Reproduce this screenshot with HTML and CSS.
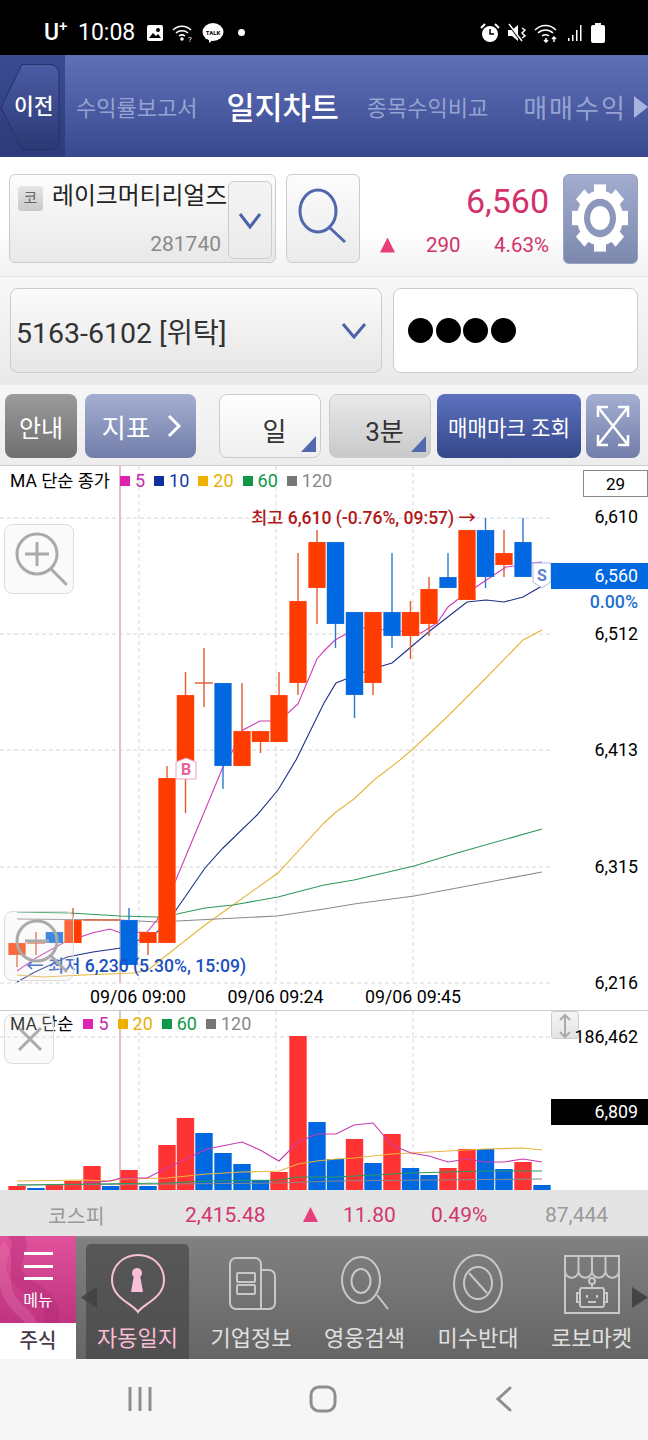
FILE: index.html
```html
<!DOCTYPE html>
<html lang="ko">

<head>
  <meta charset="UTF-8">
  <meta name="viewport" content="width=device-width, initial-scale=1.0">
  <title>일지차트</title>
  <link rel="stylesheet" href="styles.css">
</head>

<body>
  <!-- 상태바 -->
  <div class="status">
    <div class="status-left">
      <span class="carrier">U<sup>+</sup></span>
      <span class="clock">10:08</span>
      <svg class="ic" width="18" height="18" viewBox="0 0 18 18"><rect x="1" y="1" width="16" height="16" rx="2" fill="#fff"/><circle cx="12" cy="6" r="2" fill="#000"/><path d="M3 14l4-5 3 3 2-2 3 4z" fill="#000"/></svg>
      <svg class="ic" width="22" height="20" viewBox="0 0 22 20" fill="none" stroke="#fff" stroke-width="1.5"><path d="M1 7c5-5 13-5 18 0M4 10c3-3 9-3 12 0M7 13c2-1.500 4-1.500 6 0"/><circle cx="10" cy="16" r="1" fill="#fff"/><text x="16" y="19" class="ic-q">?</text></svg>
      <svg class="ic" width="22" height="22" viewBox="0 0 22 22"><ellipse cx="11" cy="10" rx="10.500" ry="9" fill="#fff"/><path d="M7 17l0 4 5-4z" fill="#fff"/><text x="11" y="12.500" class="ic-talk">TALK</text></svg>
      <span class="dot"></span>
    </div>
    <div class="status-right">
      <svg class="ic" width="20" height="20" viewBox="0 0 20 20"><circle cx="10" cy="11" r="8" fill="#fff"/><path d="M10 6v5h4" stroke="#000" stroke-width="1.500" fill="none"/><path d="M1 5l4-4M19 5l-4-4" stroke="#fff" stroke-width="2"/></svg>
      <svg class="ic" width="20" height="20" viewBox="0 0 20 20"><path d="M1 7h4l6-5v16l-6-5H1z" fill="#fff"/><path d="M2 2l12 16" stroke="#000" stroke-width="2"/><path d="M2 1l13 17" stroke="#fff" stroke-width="1.500"/><path d="M15 5l3 2-3 3 3 3-3 2" stroke="#fff" fill="none" stroke-width="1.500"/></svg>
      <svg class="ic" width="26" height="20" viewBox="0 0 26 20" fill="none" stroke="#fff" stroke-width="1.500"><path d="M1 7c6-6 15-6 21 0M4 10c4-4 11-4 15 0M8 13c2-1.500 5-1.500 7 0"/><path d="M12 15v4M10 17l2 2 2-2M20 19v-5M18 16l2-2 2 2"/></svg>
      <svg class="ic" width="17" height="20" viewBox="0 0 17 20" fill="#fff"><rect x="1" y="15" width="1.500" height="3"/><rect x="5" y="12" width="1.500" height="6"/><rect x="9" y="7" width="1.500" height="11"/><rect x="13" y="2" width="1.500" height="16"/></svg>
      <svg class="ic" width="14" height="20" viewBox="0 0 14 20" fill="#fff"><rect x="4" y="0" width="6" height="3"/><rect x="0" y="2" width="14" height="18" rx="2"/></svg>
    </div>
  </div>

  <!-- 상단 탭 -->
  <div class="nav">
    <div class="back-wrap">
      <svg class="back-shape" width="60" height="87" viewBox="0 0 60 87">
        <defs>
          <linearGradient id="backFill" x1="0" y1="0" x2="0" y2="1">
            <stop offset="0" stop-color="#4c5ca3"/>
            <stop offset="1" stop-color="#2a3874"/>
          </linearGradient>
        </defs>
        <path d="M22 .5H50a9 9 0 0 1 9 9V78a8 8 0 0 1-8 8H22L1 43.500z" fill="url(#backFill)" stroke="#25316a"/>
      </svg>
      <span class="back">이전</span>
    </div>
    <div class="tabs">
      <span class="tab">수익률보고서</span>
      <span class="tab active">일지차트</span>
      <span class="tab">종목수익비교</span>
      <span class="tab wide">매매수익</span>
    </div>
    <span class="tab-next"></span>
  </div>

  <!-- 종목 -->
  <div class="stock-row">
    <div class="stock-box">
      <div class="stock-info">
        <div class="stock-name"><span class="badge">코</span><span class="name">레이크머티리얼즈</span></div>
        <div class="stock-code">281740</div>
      </div>
      <div class="stock-drop">
        <svg width="24" height="17" viewBox="0 0 24 17" fill="none" stroke="#4d62a8" stroke-width="3"><path d="M2 2l10 13L22 2"/></svg>
      </div>
    </div>
    <div class="search-btn">
      <svg width="74" height="89" viewBox="0 0 74 89" fill="none" stroke="#5267ad" stroke-width="3"><ellipse cx="32" cy="37" rx="18" ry="21"/><path d="M44 54l15 14"/></svg>
    </div>
    <div class="price">
      <div class="price-now">6,560</div>
      <div class="price-diff">
        <span class="up"></span>
        <span class="diff">290</span>
        <span class="rate">4.63%</span>
      </div>
    </div>
    <div class="gear-btn">
      <svg width="74" height="89" viewBox="0 0 74 89">
        <g transform="translate(37 44) scale(1 1.200)" fill="#fff">
          <rect x="-6" y="-28" width="12" height="56"/>
          <rect x="-6" y="-28" width="12" height="56" transform="rotate(45)"/>
          <rect x="-6" y="-28" width="12" height="56" transform="rotate(90)"/>
          <rect x="-6" y="-28" width="12" height="56" transform="rotate(135)"/>
          <circle r="23"/>
          <circle r="16" fill="#8c97bc"/>
          <circle r="10"/>
        </g>
      </svg>
    </div>
  </div>

  <!-- 계좌 -->
  <div class="account-row">
    <div class="account">
      <span>5163-6102 [위탁]</span>
      <svg width="26" height="17" viewBox="0 0 26 17" fill="none" stroke="#4d62a8" stroke-width="3"><path d="M2 2l11 13L24 2"/></svg>
    </div>
    <div class="password">
      <i></i><i></i><i></i><i></i>
    </div>
  </div>

  <!-- 버튼 -->
  <div class="tools">
    <div class="tbtn guide">안내</div>
    <div class="tbtn index-btn">지표
      <svg width="14" height="24" viewBox="0 0 14 24" fill="none" stroke="#fff" stroke-width="3"><path d="M2 2l10 10L2 22"/></svg>
    </div>
    <div class="tbtn pick day">일</div>
    <div class="tbtn pick min">3분</div>
    <div class="tbtn mark">매매마크 조회</div>
    <div class="tbtn expand">
      <svg width="34" height="42" viewBox="0 0 34 42" fill="none" stroke="#fff" stroke-width="2.500"><path d="M2 2l30 38M32 2L2 40M2 12V2h10M22 2h10v10M2 30v10h10M22 40h10V30"/></svg>
    </div>
  </div>

  <!-- 차트 -->
  <div class="price-panel">
    <svg id="priceChart" class="chart" width="648" height="545" viewBox="0 465 648 545"></svg>
    <div class="legend">
      <span class="legend-title">MA 단순 종가</span>
      <span class="ma c5">5</span>
      <span class="ma c10">10</span>
      <span class="ma c20">20</span>
      <span class="ma c60">60</span>
      <span class="ma c120">120</span>
    </div>
    <div class="count">29</div>
    <div class="zoom-btn zoom-in">
      <svg width="68" height="68" viewBox="0 0 68 68" fill="none" stroke="#aaa" stroke-width="3"><circle cx="32" cy="29" r="20"/><path d="M46 44l15 15" stroke-linecap="round"/><path d="M32 17v24M20 29h24"/></svg>
    </div>
    <div class="zoom-btn zoom-out">
      <svg width="68" height="68" viewBox="0 0 68 68" fill="none" stroke="#aaa" stroke-width="3"><circle cx="32" cy="29" r="20"/><path d="M46 44l15 15" stroke-linecap="round"/><path d="M20 29h24"/></svg>
    </div>
    <div class="tag-now">6,560</div>
    <div class="tag-rate">0.00%</div>
  </div>

  <div class="volume-panel">
    <svg id="volumeChart" class="chart" width="648" height="180" viewBox="0 1010 648 180"></svg>
    <div class="legend legend-volume">
      <span class="legend-title">MA 단순</span>
      <span class="ma c5">5</span>
      <span class="ma c20">20</span>
      <span class="ma c60">60</span>
      <span class="ma c120">120</span>
    </div>
    <div class="close-btn">
      <svg width="48" height="48" viewBox="0 0 48 48" stroke="#aaa" stroke-width="3"><path d="M14 13l22 22M36 13L14 35"/></svg>
    </div>
    <div class="resize-btn">
      <svg width="26" height="28" viewBox="0 0 26 28" fill="none" stroke="#aaa" stroke-width="2"><path d="M13 3v22M8 8l5-5 5 5M8 20l5 5 5-5"/></svg>
    </div>
    <div class="vol-max">186,462</div>
    <div class="tag-vol">6,809</div>
  </div>

  <!-- 코스피 -->
  <div class="kospi">
    <span class="k-name">코스피</span>
    <span class="k-val">2,415.48</span>
    <span class="up"></span>
    <span class="k-diff">11.80</span>
    <span class="k-rate">0.49%</span>
    <span class="k-vol">87,444</span>
  </div>

  <!-- 하단 메뉴 -->
  <div class="bottom">
    <div class="menu">
      <div class="menu-top">
        <svg class="swirl" width="76" height="87" viewBox="0 0 76 87" fill="none">
          <path d="M14-4C30 14 2 28 20 44s38 18 30 46" stroke="#b52a78" stroke-opacity=".4" stroke-width="15"/>
          <path d="M0 10C12 20 0 40 8 58s22 20 24 32" stroke="#ee8cbc" stroke-opacity=".25" stroke-width="11"/>
        </svg>
        <span class="bars"><i></i><i></i><i></i></span>
        <span class="menu-text">메뉴</span>
      </div>
      <div class="menu-sub">주식</div>
    </div>
    <div class="items">
      <div class="item on">
        <svg width="70" height="60" viewBox="0 0 70 60" fill="none" stroke="#f8c0d8" stroke-width="2"><path d="M35 58C30 50 9 44 9 26 9 11 21 1 35 1s26 10 26 25c0 18-21 24-26 32z"/><circle cx="34" cy="19" r="5" fill="#f8c0d8" stroke="none"/><path d="M31 21h6l3 17H28z" fill="#f8c0d8" stroke="none"/></svg>
        <span>자동일지</span>
      </div>
      <div class="item">
        <svg width="70" height="60" viewBox="0 0 70 60" fill="none" stroke="#c8c8c8" stroke-width="2"><path d="M20 4h19a6 6 0 0 1 6 6v45H20a6 6 0 0 1-6-6V10a6 6 0 0 1 6-6z"/><path d="M45 16h8a6 6 0 0 1 6 6v27a6 6 0 0 1-6 6h-8"/><rect x="21" y="19" width="18" height="9" rx="1"/><rect x="21" y="31" width="18" height="9" rx="1"/></svg>
        <span>기업정보</span>
      </div>
      <div class="item">
        <svg width="70" height="60" viewBox="0 0 70 60" fill="none" stroke="#c8c8c8" stroke-width="2"><ellipse cx="31" cy="26" rx="19" ry="23"/><ellipse cx="31" cy="27" rx="9.500" ry="12"/><path d="M47 41l11 14"/></svg>
        <span>영웅검색</span>
      </div>
      <div class="item">
        <svg width="70" height="60" viewBox="0 0 70 60" fill="none" stroke="#c8c8c8" stroke-width="2"><ellipse cx="35" cy="29.500" rx="24" ry="28.500"/><ellipse cx="35" cy="29" rx="14" ry="16"/><path d="M26 19l18 20"/></svg>
        <span>미수반대</span>
      </div>
      <div class="item">
        <svg width="70" height="60" viewBox="0 0 70 60" fill="none" stroke="#c8c8c8" stroke-width="2"><path d="M8 2h54v57H8zM8 2v15a6.700 6.700 0 0 0 13.500 0 6.700 6.700 0 0 0 13.500 0 6.700 6.700 0 0 0 13.500 0 6.700 6.700 0 0 0 13.500 0V2M21.500 2v15M35 2v15M48.500 2v15"/><circle cx="35" cy="27" r="3"/><path d="M35 30v4"/><rect x="23" y="34" width="24" height="19" rx="2"/><path d="M23 39h-3v9h3M47 39h3v9h-3M30 41v3M40 41v3M31 48h8"/></svg>
        <span>로보마켓</span>
      </div>
    </div>
    <span class="arrow arrow-left"></span>
    <span class="arrow arrow-right"></span>
  </div>

  <!-- 시스템 버튼 -->
  <div class="system">
    <svg width="26" height="26" viewBox="0 0 26 26" stroke="#8f8f8f" stroke-width="3"><path d="M3 1v24M13 1v24M23 1v24"/></svg>
    <svg width="28" height="28" viewBox="0 0 28 28" fill="none" stroke="#8f8f8f" stroke-width="3"><rect x="2" y="2" width="24" height="24" rx="8"/></svg>
    <svg width="16" height="26" viewBox="0 0 16 26" fill="none" stroke="#8f8f8f" stroke-width="3" stroke-linecap="round"><path d="M14 2L2 13l12 11"/></svg>
  </div>

  <script src="chart.js"></script>
</body>

</html>
```

FILE: styles.css
```css
* {
  box-sizing: border-box;
}

body {
  margin: 0;
  padding: 0;
  width: 648px;
  font-family: Roboto, "Noto Sans CJK KR", sans-serif;
  background-color: #f6f6f6;
  overflow-x: hidden;
}

/* 상태바 */
.status {
  height: 55px;
  background-color: #000;
  color: #fff;
  display: flex;
  justify-content: space-between;
  align-items: center;
  padding: 10px 43px 0 44px;
}

.status-left,
.status-right {
  display: flex;
  align-items: center;
}

.status-right {
  gap: 7px;
}

.carrier {
  font-size: 23px;
  font-weight: 500;
  width: 34px;
}

.carrier sup {
  font-size: 15px;
  line-height: 0;
}

.clock {
  font-size: 23px;
  width: 68px;
}

.status-left .ic {
  margin-right: 8px;
}

.ic-q {
  font-size: 8px;
  fill: #fff;
  stroke: none;
}

.ic-talk {
  font-size: 6px;
  font-weight: 700;
  text-anchor: middle;
  fill: #000;
}

.dot {
  width: 7px;
  height: 7px;
  margin-left: 6px;
  border-radius: 50%;
  background-color: #fff;
}

/* 상단 탭 */
.nav {
  height: 102px;
  display: flex;
  align-items: center;
  background: linear-gradient(#6070b6, #39498f);
  overflow: hidden;
}

.back-wrap {
  position: relative;
  width: 65px;
  height: 102px;
  padding: 37px 0 0 14px;
  background: linear-gradient(#3b4b92, #2d3b7b);
}

.back-shape {
  position: absolute;
  top: 9px;
  left: 0;
}

.back {
  position: relative;
  font-size: 21.500px;
  font-weight: 500;
  line-height: 30px;
  color: #fff;
}

.tabs {
  display: flex;
  align-items: center;
  gap: 29px;
  margin-left: 11px;
}

.tab {
  font-size: 22px;
  color: #96a3d2;
  white-space: nowrap;
}

.tab.active {
  margin-right: -1px;
  font-size: 30.500px;
  font-weight: 500;
  color: #fff;
}

.tab.wide {
  margin-left: 6px;
  font-size: 26px;
  letter-spacing: 2px;
}

.tab-next {
  position: absolute;
  left: 634px;
  top: 96px;
  width: 14px;
  height: 22px;
  background-color: #a9b3dd;
  clip-path: polygon(0 0, 100% 50%, 0 100%);
}

/* 종목 */
.stock-row {
  height: 120px;
  display: flex;
  align-items: flex-start;
  padding: 17px 0 0 9px;
  background: linear-gradient(#fff 60%, #f1f1f1);
  border-bottom: 1px solid #e2e2e2;
}

.stock-box {
  width: 267px;
  height: 89px;
  display: flex;
  border: 1px solid #ccc;
  border-radius: 6px;
  background: linear-gradient(#fcfcfc, #e8e8e8);
}

.stock-info {
  width: 218px;
  padding: 11px 0 0 8px;
}

.stock-name {
  display: flex;
  align-items: center;
  white-space: nowrap;
}

.badge {
  width: 25px;
  height: 25px;
  margin-right: 9px;
  border-radius: 4px;
  flex: none;
  font-size: 15px;
  line-height: 25px;
  text-align: center;
  color: #666;
  background: linear-gradient(#e6e6e6, #c8c8c8);
}

.name {
  font-size: 23.800px;
  line-height: 25px;
  margin-top: -4px;
  color: #222;
}

.stock-code {
  margin: 21px 7px 0 0;
  font-size: 21px;
  line-height: 24px;
  text-align: right;
  color: #8a8a8a;
}

.stock-drop {
  width: 44px;
  height: 78px;
  margin-top: 6px;
  display: flex;
  align-items: center;
  justify-content: center;
  border: 1px solid #ccc;
  border-radius: 6px;
  background: linear-gradient(#f4f4f4, #ebebeb);
}

.search-btn {
  width: 74px;
  height: 89px;
  margin-left: 10px;
  border: 1px solid #ccc;
  border-radius: 6px;
  background: linear-gradient(#fcfcfc, #ebebeb);
}

.search-btn svg,
.gear-btn svg {
  display: block;
  margin: -1px;
}

.price {
  width: 189px;
  height: 89px;
  padding-top: 7px;
}

.price-now {
  font-size: 34px;
  line-height: 40px;
  text-align: right;
  color: #d2326b;
}

.price-diff {
  display: flex;
  align-items: center;
  height: 24px;
  margin-top: 12px;
  padding-left: 20px;
  font-size: 20.500px;
  color: #d2326b;
}

.up {
  width: 15px;
  height: 15px;
  background-color: #e83e7c;
  clip-path: polygon(50% 0, 100% 100%, 0 100%);
  flex: none;
}

.diff {
  margin-left: 31px;
}

.rate {
  margin-left: auto;
}

.gear-btn {
  width: 75px;
  height: 90px;
  margin-left: 14px;
  border: 1px solid #97a2c6;
  border-radius: 6px;
  background: linear-gradient(#a1accf, #7d88ae);
}

/* 계좌 */
.account-row {
  height: 108px;
  display: flex;
  gap: 11px;
  padding: 11px 10px 0;
  background: linear-gradient(#f8f8f8, #e9e9e9);
}

.account {
  width: 372px;
  height: 85px;
  display: flex;
  align-items: center;
  justify-content: space-between;
  padding: 0 14px 0 5px;
  font-size: 28.500px;
  color: #333;
  border: 1px solid #ccc;
  border-radius: 8px;
  background: linear-gradient(#fbfbfb, #e6e6e6);
}

.password {
  width: 245px;
  height: 85px;
  display: flex;
  align-items: center;
  gap: 2.500px;
  padding-left: 14px;
  border: 1px solid #ccc;
  border-radius: 8px;
  background-color: #fff;
}

.password i {
  width: 25px;
  height: 25px;
  border-radius: 50%;
  background-color: #000;
}

/* 버튼 */
.tools {
  height: 80px;
  display: flex;
  padding: 9px 0 0 5px;
  background: linear-gradient(#f6f6f6, #ededed);
}

.tbtn {
  height: 64px;
  flex: none;
  display: flex;
  align-items: center;
  justify-content: center;
  border-radius: 8px;
  color: #fff;
  font-size: 24px;
}

.guide {
  width: 72px;
  background: linear-gradient(#9b9b9b, #6f6f6f);
}

.index-btn {
  width: 111px;
  margin-left: 8px;
  padding-left: 2px;
  gap: 17px;
  font-size: 26.500px;
  background: linear-gradient(#a4aed1, #727eaa);
}

.pick {
  position: relative;
  width: 102px;
  padding-top: 6px;
  color: #333;
  font-size: 26px;
  border: 1px solid #ccc;
}

.pick::after {
  content: "";
  position: absolute;
  right: 4px;
  bottom: 5px;
  width: 15px;
  height: 16px;
  background-color: #5268b0;
  clip-path: polygon(100% 0, 100% 100%, 0 100%);
}

.day {
  margin-left: 23px;
  padding-left: 9px;
  background: linear-gradient(#fff, #efefef);
}

.min {
  margin-left: 8px;
  padding-left: 9px;
  background: linear-gradient(#e9e9e9, #c9c9c9);
}

.mark {
  width: 144px;
  margin-left: 6px;
  font-size: 21.200px;
  background: linear-gradient(#5d72c0, #354789);
}

.expand {
  width: 54px;
  margin-left: 5px;
  background: linear-gradient(#a4aed1, #727eaa);
}

/* 차트 */
.price-panel {
  position: relative;
  height: 545px;
  border-top: 1px solid #ccc;
  background-color: #fff;
}

.volume-panel {
  position: relative;
  height: 180px;
  border-top: 1px solid #ccc;
  background-color: #fff;
}

.chart {
  position: absolute;
  top: -1px;
  left: 0;
  display: block;
}

.chart text {
  font-family: Roboto, "Noto Sans CJK KR", sans-serif;
}

.legend {
  position: absolute;
  top: 4px;
  left: 10px;
  display: flex;
  align-items: center;
  gap: 9px;
  font-size: 18px;
  line-height: 22px;
}

.legend-volume {
  top: 2px;
}

.legend-title {
  margin-right: 1px;
  font-size: 17.500px;
  color: #000;
}

.ma {
  display: flex;
  align-items: center;
  gap: 5px;
}

.ma::before {
  content: "";
  width: 10px;
  height: 10px;
}

.c5 { color: #c030a8; }
.c5::before { background-color: #e020b0; }
.c10 { color: #1338a8; }
.c10::before { background-color: #1030a0; }
.c20 { color: #eab000; }
.c20::before { background-color: #f0b000; }
.c60 { color: #109848; }
.c60::before { background-color: #109848; }
.c120 { color: #888; }
.c120::before { background-color: #777; }

.count {
  position: absolute;
  top: 4px;
  right: 0;
  width: 65px;
  height: 27px;
  line-height: 27px;
  text-align: center;
  font-size: 17px;
  border: 1px solid #888;
  background-color: #fff;
}

.zoom-btn {
  position: absolute;
  left: 4px;
  width: 70px;
  height: 70px;
  border: 1px solid #ddd;
  border-radius: 8px;
  background-color: rgba(236, 236, 236, .25);
}

.zoom-in {
  top: 58px;
}

.zoom-out {
  top: 445px;
}

.tag-now {
  position: absolute;
  top: 97px;
  left: 551px;
  width: 97px;
  height: 26px;
  padding-right: 10px;
  text-align: right;
  line-height: 26px;
  font-size: 17.800px;
  color: #fff;
  background-color: #0068e0;
}

.tag-rate {
  position: absolute;
  top: 125px;
  right: 10px;
  font-size: 17.800px;
  font-weight: 500;
  line-height: 22px;
  color: #1f6fd0;
}

.close-btn {
  position: absolute;
  top: 3px;
  left: 4px;
  width: 50px;
  height: 50px;
  border: 1px solid #ddd;
  border-radius: 8px;
  background-color: rgba(236, 236, 236, .25);
}

.resize-btn {
  position: absolute;
  top: 0;
  left: 551px;
  width: 28px;
  height: 28px;
  border: 1px solid #ccc;
  border-radius: 3px;
  background: linear-gradient(#f4f4f4, #e4e4e4);
}

.resize-btn svg {
  display: block;
}

.vol-max {
  position: absolute;
  top: 15px;
  right: 10px;
  font-size: 17.800px;
  line-height: 22px;
  color: #000;
}

.tag-vol {
  position: absolute;
  top: 88px;
  left: 551px;
  width: 97px;
  height: 26px;
  padding-right: 10px;
  text-align: right;
  line-height: 26px;
  font-size: 17.800px;
  color: #fff;
  background-color: #000;
}

/* 코스피 */
.kospi {
  height: 46px;
  display: flex;
  align-items: center;
  padding-top: 3px;
  font-size: 21px;
  color: #d2366f;
  background-color: #e4e4e5;
}

.k-name {
  margin-left: 48px;
  width: 137px;
  font-size: 20.500px;
  color: #999;
}

.k-val {
  width: 118px;
}

.k-diff {
  margin-left: 25px;
  width: 88px;
}

.k-rate {
  width: 114px;
}

.k-vol {
  color: #999;
}

/* 하단 메뉴 */
.bottom {
  position: relative;
  height: 123px;
  display: flex;
  border-top: 2px solid #8a8a8a;
  background: linear-gradient(#808080, #656565);
}

.menu {
  width: 76px;
  margin-top: -2px;
}

.menu-top {
  position: relative;
  height: 87px;
  display: flex;
  flex-direction: column;
  align-items: center;
  padding-top: 16px;
  color: #fff;
  background: linear-gradient(#e0529a, #bf3380);
  overflow: hidden;
}

.swirl {
  position: absolute;
  top: 0;
  left: 0;
}

.bars {
  position: relative;
  display: flex;
  flex-direction: column;
  gap: 9.500px;
}

.bars i {
  display: block;
  width: 29px;
  height: 3px;
  background-color: #fff;
}

.menu-text {
  position: relative;
  margin-top: 10px;
  font-size: 16px;
  line-height: 22px;
}

.menu-sub {
  height: 36px;
  line-height: 36px;
  text-align: center;
  font-size: 20px;
  font-weight: 500;
  color: #4a3a48;
  background-color: #fff;
}

.items {
  display: flex;
  gap: 10.500px;
  margin-left: 10px;
  padding-top: 6px;
}

.item {
  width: 103px;
  display: flex;
  flex-direction: column;
  align-items: center;
  padding-top: 10px;
  border-radius: 5px 5px 0 0;
  color: #e0e0e0;
  font-size: 22px;
}

.item span {
  margin-top: 11px;
  line-height: 28px;
  white-space: nowrap;
}

.item.on {
  color: #f8bcd8;
  background: linear-gradient(#575757, #4f4f4f);
}

.arrow {
  position: absolute;
  top: 49px;
  width: 16px;
  height: 21px;
  background-color: #444;
}

.arrow-left {
  left: 81px;
  clip-path: polygon(100% 0, 100% 100%, 0 50%);
}

.arrow-right {
  right: 0;
  clip-path: polygon(0 0, 100% 50%, 0 100%);
}

/* 시스템 버튼 */
.system {
  height: 81px;
  display: flex;
  align-items: center;
  padding: 0 136px 2px 127px;
  justify-content: space-between;
  background-color: #f6f6f6;
}

.system svg:nth-child(2) {
  margin-left: -4px;
}
```

FILE: chart.js
```js
// 캔들: [x, 고가, 저가, 시가, 종가, 색]
const R = 'r', B = 'b'
const candles = [
  [17, 943, 967, 943, 955, R], [36, 932, 955, 943, 943, R], [54.4, 932, 943, 932, 943, B],
  [73, 908, 943, 920, 943, R], [92, 920, 920, 920, 920, R], [110.6, 920, 920, 920, 920, R],
  [129, 908, 965, 920, 965, B], [148, 932, 955, 932, 943, R], [167, 766, 943, 778, 943, R],
  [185.5, 672, 813, 695, 778, R], [204, 648, 707, 683, 683, R], [223, 683, 789, 683, 766, B],
  [242, 683, 766, 731, 766, R], [260.5, 731, 753, 731, 742, R], [279, 672, 742, 695, 742, R],
  [298, 553, 695, 601, 683, R], [317, 530, 624, 542, 588, R], [335.5, 542, 648, 542, 624, B],
  [354.5, 612, 718, 612, 695, B], [373, 612, 695, 612, 683, R], [392, 553, 648, 612, 636, B],
  [410.5, 601, 659, 612, 636, R], [429, 577, 636, 589, 624, R], [448, 553, 588, 577, 588, B],
  [467, 530, 600, 530, 600, R], [485.5, 518, 588, 530, 577, B], [504, 530, 577, 553, 565, R],
  [523, 518, 577, 542, 577, B]
]

const priceMa = {
  '#d03ab8': [[17, 971], [36, 958], [63, 943], [92, 933], [110, 929], [121, 933], [147, 932], [157, 920], [175, 882], [223, 767], [232, 752], [243, 730], [260, 721], [270, 721], [288, 713], [298, 704], [317, 659], [324, 651], [335, 640], [346, 634], [364, 628], [421, 633], [437, 623], [448, 607], [457, 600], [476, 587], [494, 575], [506, 567], [514, 566], [532, 563], [542, 562]],
  '#1b2f86': [[17, 982], [33, 973], [67, 957], [93, 952], [121, 948], [157, 932], [176, 910], [205, 868], [223, 848], [257, 815], [278, 790], [296, 760], [324, 703], [336, 683], [346, 679], [364, 672], [382, 666], [392, 663], [411, 647], [431, 630], [467, 602], [486, 600], [504, 602], [523, 597], [542, 586]],
  '#e6b63c': [[17, 975], [43, 977], [83, 975], [133, 973], [148, 970], [177, 947], [205, 925], [233, 905], [278, 873], [324, 823], [336, 812], [354, 799], [374, 780], [400, 760], [414, 748], [447, 717], [484, 680], [523, 640], [542, 630]],
  '#2d9a5c': [[17, 912], [70, 913], [120, 916], [157, 917], [177, 914], [205, 908], [233, 905], [278, 897], [324, 885], [354, 880], [414, 866], [457, 853], [542, 829]],
  '#8a8a8a': [[17, 919], [120, 920], [157, 922], [177, 921], [277, 916], [324, 909], [354, 904], [414, 896], [457, 888], [542, 872]]
}

// 거래량: [x, 위쪽 y, 색]
const bars = [
  [17, 1186, R], [36, 1188, B], [54.4, 1185, R], [73, 1181, R], [92, 1166, R], [110.6, 1186, B], [129, 1170, R],
  [148, 1186, B], [167, 1145, R], [185.5, 1118, R], [204, 1133, B], [223, 1153, B], [242, 1164, B], [260.5, 1180, B],
  [279, 1172, R], [298, 1036, R], [317, 1122, B], [335.5, 1159, B], [354.5, 1139, R], [373, 1163, B], [392, 1134, R],
  [410.5, 1168, B], [429, 1175, B], [448, 1168, R], [467, 1149, R], [485.5, 1149, B], [504, 1169, B], [523, 1162, R], [542, 1185, B]
]

const volumeMa = {
  '#8a8a8a': [[17, 1185], [167, 1184], [279, 1183], [336, 1181], [542, 1179]],
  '#2d9a5c': [[17, 1185], [167, 1183], [207, 1181], [279, 1180], [298, 1177], [336, 1177], [411, 1173], [486, 1171], [542, 1171]],
  '#e6b63c': [[17, 1181], [83, 1180], [110, 1181], [121, 1179], [167, 1178], [207, 1174], [242, 1172], [279, 1171], [298, 1164], [317, 1161], [336, 1159], [354, 1158], [392, 1154], [411, 1153], [448, 1151], [486, 1149], [523, 1148], [542, 1150]],
  '#c93ab0': [[83, 1183], [110, 1181], [121, 1178], [147, 1178], [167, 1168], [207, 1149], [242, 1142], [260, 1150], [279, 1161], [298, 1142], [317, 1134], [336, 1134], [354, 1125], [373, 1123], [392, 1145], [411, 1153], [429, 1156], [448, 1162], [467, 1159], [486, 1162], [504, 1162], [523, 1159], [542, 1162]]
}

function grid(d) {
  return `<path d="${d}" stroke="#d6d6d6" stroke-dasharray="4 3" fill="none"/>`
}

function polyline(points, color) {
  return `<polyline points="${points.join(' ')}" fill="none" stroke="${color}" stroke-width="1.1"/>`
}

function label(x, y, str, fill, extra) {
  return `<text x="${x}" y="${y}" fill="${fill}" ${extra || ''}>${str}</text>`
}

// 1.가격 차트
let price = ''
price += grid('M0 518H551M0 634H551M0 750H551M0 867H551M0 983H551')
price += grid('M139 466V983M276 466V983M413 466V983')
price += '<rect x="119" y="466" width="2" height="517" fill="#dcc5c0"/>'

for (const color in priceMa) price += polyline(priceMa[color], color)

candles.forEach(([x, high, low, top, bottom, type]) => {
  const wick = type === R ? '#e05a30' : '#2a78d0'
  const fill = type === R ? '#ff3c00' : '#0068e0'
  if (high !== low) price += `<path d="M${x} ${high}V${low}" stroke="${wick}" stroke-width="1.4"/>`
  if (bottom - top < 1) {
    price += `<path d="M${x - 9} ${top}h18" stroke="${wick}" stroke-width="1.4"/>`
  } else {
    price += `<rect x="${x - 8.7}" y="${top}" width="17.4" height="${bottom - top}" fill="${fill}" stroke="#ffc9b8" stroke-opacity=".35" stroke-width=".5"/>`
  }
})

// 매수, 매도 표시
price += '<path d="M176 762l10-4 10 4v17h-20z" fill="#fff" stroke="#f0a0c4" stroke-width="1"/>'
price += label(186, 775, 'B', '#e8609c', 'font-size="16" font-weight="700" text-anchor="middle"')
price += '<path d="M533 563h18v19l-9 6-9-6z" fill="#fff" stroke="#a9bde4" stroke-width="1"/>'
price += label(542, 581, 'S', '#5a80d0', 'font-size="16" font-weight="700" text-anchor="middle"')

price += label(476, 524, '최고 6,610 (-0.76%, 09:57) →', '#b01818', 'font-size="17.500" font-weight="500" text-anchor="end"')
price += label(26, 972, '← 최저 6,230 (5.30%, 15:09)', '#1a4fc0', 'font-size="17.600" font-weight="500"')

const axis = 'font-size="17.800" text-anchor="end"'
price += label(638, 523, '6,610', '#000', axis)
price += label(638, 640, '6,512', '#000', axis)
price += label(638, 756, '6,413', '#000', axis)
price += label(638, 873, '6,315', '#000', axis)
price += label(638, 989, '6,216', '#000', axis)

const dateStyle = 'font-size="17.800" text-anchor="middle"'
price += label(138, 1003, '09/06 09:00', '#000', dateStyle)
price += label(275.500, 1003, '09/06 09:24', '#000', dateStyle)
price += label(413, 1003, '09/06 09:45', '#000', dateStyle)

document.getElementById('priceChart').innerHTML = price

// 2.거래량 차트
let volume = ''
volume += grid('M0 1037H551')
volume += grid('M139 1011V1190M276 1011V1190M413 1011V1190')
volume += '<rect x="119" y="1011" width="2" height="179" fill="#dcc5c0"/>'

bars.forEach(([x, top, type]) => {
  volume += `<rect x="${x - 8.7}" y="${top}" width="17.4" height="${1190 - top}" fill="${type === R ? '#ff3333' : '#0068e0'}"/>`
})

for (const color in volumeMa) volume += polyline(volumeMa[color], color)

document.getElementById('volumeChart').innerHTML = volume
```
